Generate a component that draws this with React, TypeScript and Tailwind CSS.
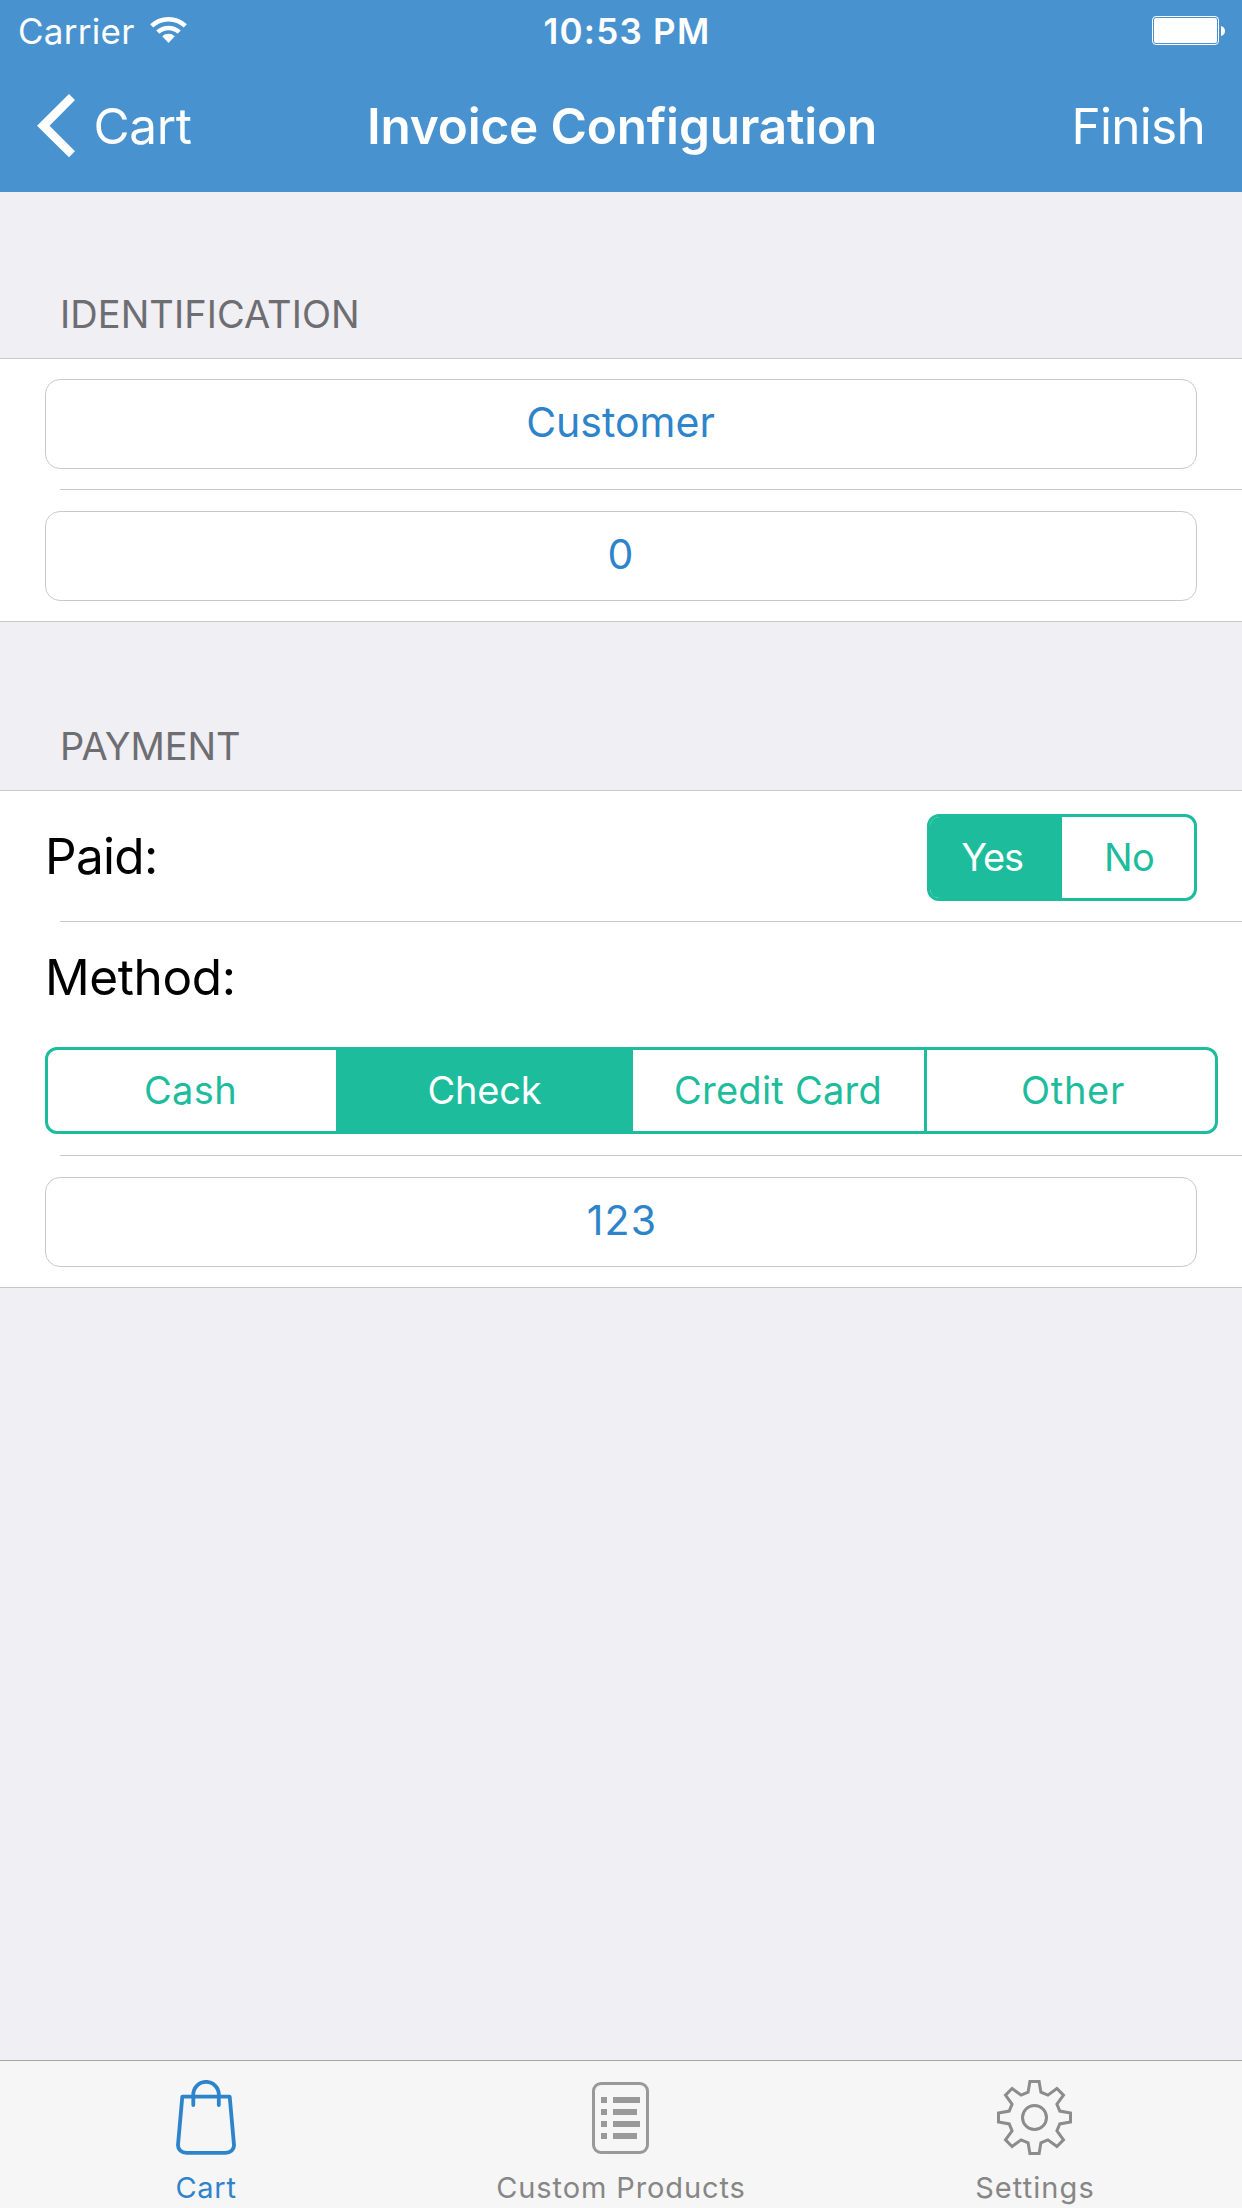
import type { ReactNode } from 'react';

function WifiIcon() {
  return (
    <svg width="37" height="28" viewBox="0 0 37 28" fill="none" stroke="#fff" strokeWidth="4.5" className="shrink-0">
      <path d="M1.7 9.8A24.6 24.6 0 0 1 35.3 9.8" />
      <path d="M7.8 16.2A15.6 15.6 0 0 1 29.2 16.2" />
      <path d="M18.5 27L12.2 20.2A9.2 9.2 0 0 1 24.8 20.2Z" fill="#fff" stroke="none" />
    </svg>
  );
}

function BatteryIcon() {
  return (
    <svg width="73" height="29" viewBox="0 0 73 29" fill="none" className="shrink-0">
      <rect x="0.5" y="0.5" width="66" height="28" rx="3.5" stroke="#fff" />
      <rect x="2" y="2" width="63" height="25" rx="2" fill="#fff" />
      <path d="M69 10C74.3 11 74.3 19 69 20Z" fill="#fff" />
    </svg>
  );
}

function BackIcon() {
  return (
    <svg width="38" height="64" viewBox="0 0 38 64" fill="#fff" className="shrink-0">
      <path d="M32 0L38 6L12.5 31.7L38 57.3L32 63.3L0 31.7Z" />
    </svg>
  );
}

function BagIcon() {
  return (
    <svg width="60" height="76" viewBox="0 0 60 76" fill="none" stroke="#2d84cb" strokeWidth="3.8" strokeLinejoin="round" strokeLinecap="round">
      <path d="M6.3 16.7H53.7L58 65C58.2 69.5 54.5 72.8 49.5 72.8H10.5C5.5 72.8 1.8 69.5 2 65Z" />
      <path d="M17.3 25V14.6A12.75 12.75 0 0 1 42.8 14.6V25" />
    </svg>
  );
}

function ListIcon() {
  return (
    <svg width="58" height="76" viewBox="0 0 58 76" fill="none">
      <rect x="1.5" y="3.5" width="54" height="69" rx="7.5" stroke="#999" strokeWidth="3" />
      <path d="M9 17h6v6h-6zM9 29h6v6h-6zM9 41h6v6h-6zM9 53h6v6h-6zM21 17h27v6h-27zM21 29h24v6h-24zM21 41h27v6h-27zM21 53h24v6h-24z" fill="#999" />
    </svg>
  );
}

function GearIcon() {
  return (
    <svg width="76" height="76" viewBox="-37.5 -37.5 76 76" fill="none" stroke="#8c8c8c" strokeWidth="3">
      <path d="M-4.6 -36H4.6L6.4 -25.3L13.4 -22.4L22.4 -29L29 -22.4L22.4 -13.4L25.3 -6.4L36 -4.6V4.6L25.3 6.4L22.4 13.4L29 22.4L22.4 29L13.4 22.4L6.4 25.3L4.6 36H-4.6L-6.4 25.3L-13.4 22.4L-22.4 29L-29 22.4L-22.4 13.4L-25.3 6.4L-36 4.6V-4.6L-25.3 -6.4L-22.4 -13.4L-29 -22.4L-22.4 -29L-13.4 -22.4L-6.4 -25.3Z" />
      <circle r="12" />
    </svg>
  );
}

function Field({ children, className }: { children: ReactNode; className: string }) {
  return (
    <div className={`mx-[45px] flex h-[90px] items-center justify-center rounded-[15px] border border-[#c9c9c9] pb-[2px] text-[41px] text-[#2d84cb] ${className}`}>
      {children}
    </div>
  );
}

function Separator({ className }: { className: string }) {
  return <div className={`ml-[60px] h-px bg-[#c8c7cc] ${className}`} />;
}

function Tab({ icon, label, className }: { icon: ReactNode; label: string; className: string }) {
  return (
    <div className={`flex flex-col items-center pt-[19px] text-[29px] leading-9 ${className}`}>
      {icon}
      <span className="mt-[14px]">{label}</span>
    </div>
  );
}

export default function App() {
  return (
    <div className="flex h-[2208px] w-[1242px] flex-col overflow-hidden bg-[#efeff4] font-['Inter',sans-serif] whitespace-nowrap">
      <header className="h-48 bg-[#4992d0] text-white">
        <div className="flex h-[62px] items-center pr-[17px] text-[35px]">
          <div className="flex w-[543.5px] items-center pl-[18px]">
            <span className="w-[132px] tracking-[0.29px]">Carrier</span>
            <div className="pb-[2px]"><WifiIcon /></div>
          </div>
          <span className="font-semibold tracking-[1.24px]">10:53 PM</span>
          <div className="ml-auto pb-px"><BatteryIcon /></div>
        </div>
        <div className="flex h-[130px] items-center pr-[37px] pb-[2px] text-[49.5px]">
          <div className="flex w-[367px] items-center pl-[37px]">
            <BackIcon />
            <span className="ml-[18.5px] tracking-[-0.35px]">Cart</span>
          </div>
          <h1 className="font-semibold tracking-[-0.19px]">Invoice Configuration</h1>
          <span className="ml-auto tracking-[-0.71px]">Finish</span>
        </div>
      </header>

      <main className="flex-1">
        <h2 className="flex h-[166px] items-end pb-6 pl-[60px] text-[38px] leading-10 tracking-[0.06px] text-[#6d6d72]">IDENTIFICATION</h2>
        <section className="border-y border-[#c8c7cc] bg-white py-5">
          <Field className="pr-px">Customer</Field>
          <Separator className="mt-5 mb-[21px]" />
          <Field className="pr-px">0</Field>
        </section>

        <h2 className="flex h-[168px] items-end pb-6 pl-[60px] text-[38px] leading-10 tracking-[-0.08px] text-[#6d6d72]">PAYMENT</h2>
        <section className="border-y border-[#c8c7cc] bg-white pt-[23px] pb-5">
          <div className="mx-[45px] flex h-[87px] items-center justify-between">
            <span className="pb-[3px] text-[49.5px] tracking-[-0.7px]">Paid:</span>
            <div className="flex h-[87px] w-[270px] overflow-hidden rounded-[12px] border-3 border-[#1cbc9c] bg-white text-[38px] text-[#1cbc9c]">
              <div className="flex w-[132px] items-center justify-center bg-[#1cbc9c] pr-[8px] tracking-[-1.2px] text-white">Yes</div>
              <div className="flex w-[132px] items-center justify-center pl-[2px] tracking-[-0.6px]">No</div>
            </div>
          </div>
          <Separator className="mt-5" />
          <div className="mt-[25px] ml-[45px] text-[49.5px] leading-[60px] tracking-[-0.4px]">Method:</div>
          <div className="mt-10 ml-[45px] flex h-[87px] w-[1173px] overflow-hidden rounded-[12px] border-3 border-[#1cbc9c] text-[38px] text-[#1cbc9c]">
            <div className="flex w-[288px] items-center justify-center pr-[3px] tracking-[0.4px]">Cash</div>
            <div className="flex w-[297px] items-center justify-center bg-[#1cbc9c] tracking-[-0.2px] text-white">Check</div>
            <div className="flex w-[294px] items-center justify-center border-r-3 border-[#1cbc9c] pr-px tracking-[0.24px]">Credit Card</div>
            <div className="flex w-[288px] items-center justify-center pl-[4px] tracking-[0.72px]">Other</div>
          </div>
          <Separator className="mt-[21px] mb-[21px]" />
          <Field className="pl-[2px] tracking-[1.16px]">123</Field>
        </section>
      </main>

      <nav className="grid h-[148px] grid-cols-3 border-t border-[#a7a6ab] bg-[#f6f6f6]">
        <Tab icon={<BagIcon />} label="Cart" className="pr-[2px] tracking-[0.72px] text-[#2d84cb]" />
        <Tab icon={<ListIcon />} label="Custom Products" className="tracking-[0.89px] text-[#868686]" />
        <Tab icon={<GearIcon />} label="Settings" className="tracking-[1.08px] text-[#868686]" />
      </nav>
    </div>
  );
}
